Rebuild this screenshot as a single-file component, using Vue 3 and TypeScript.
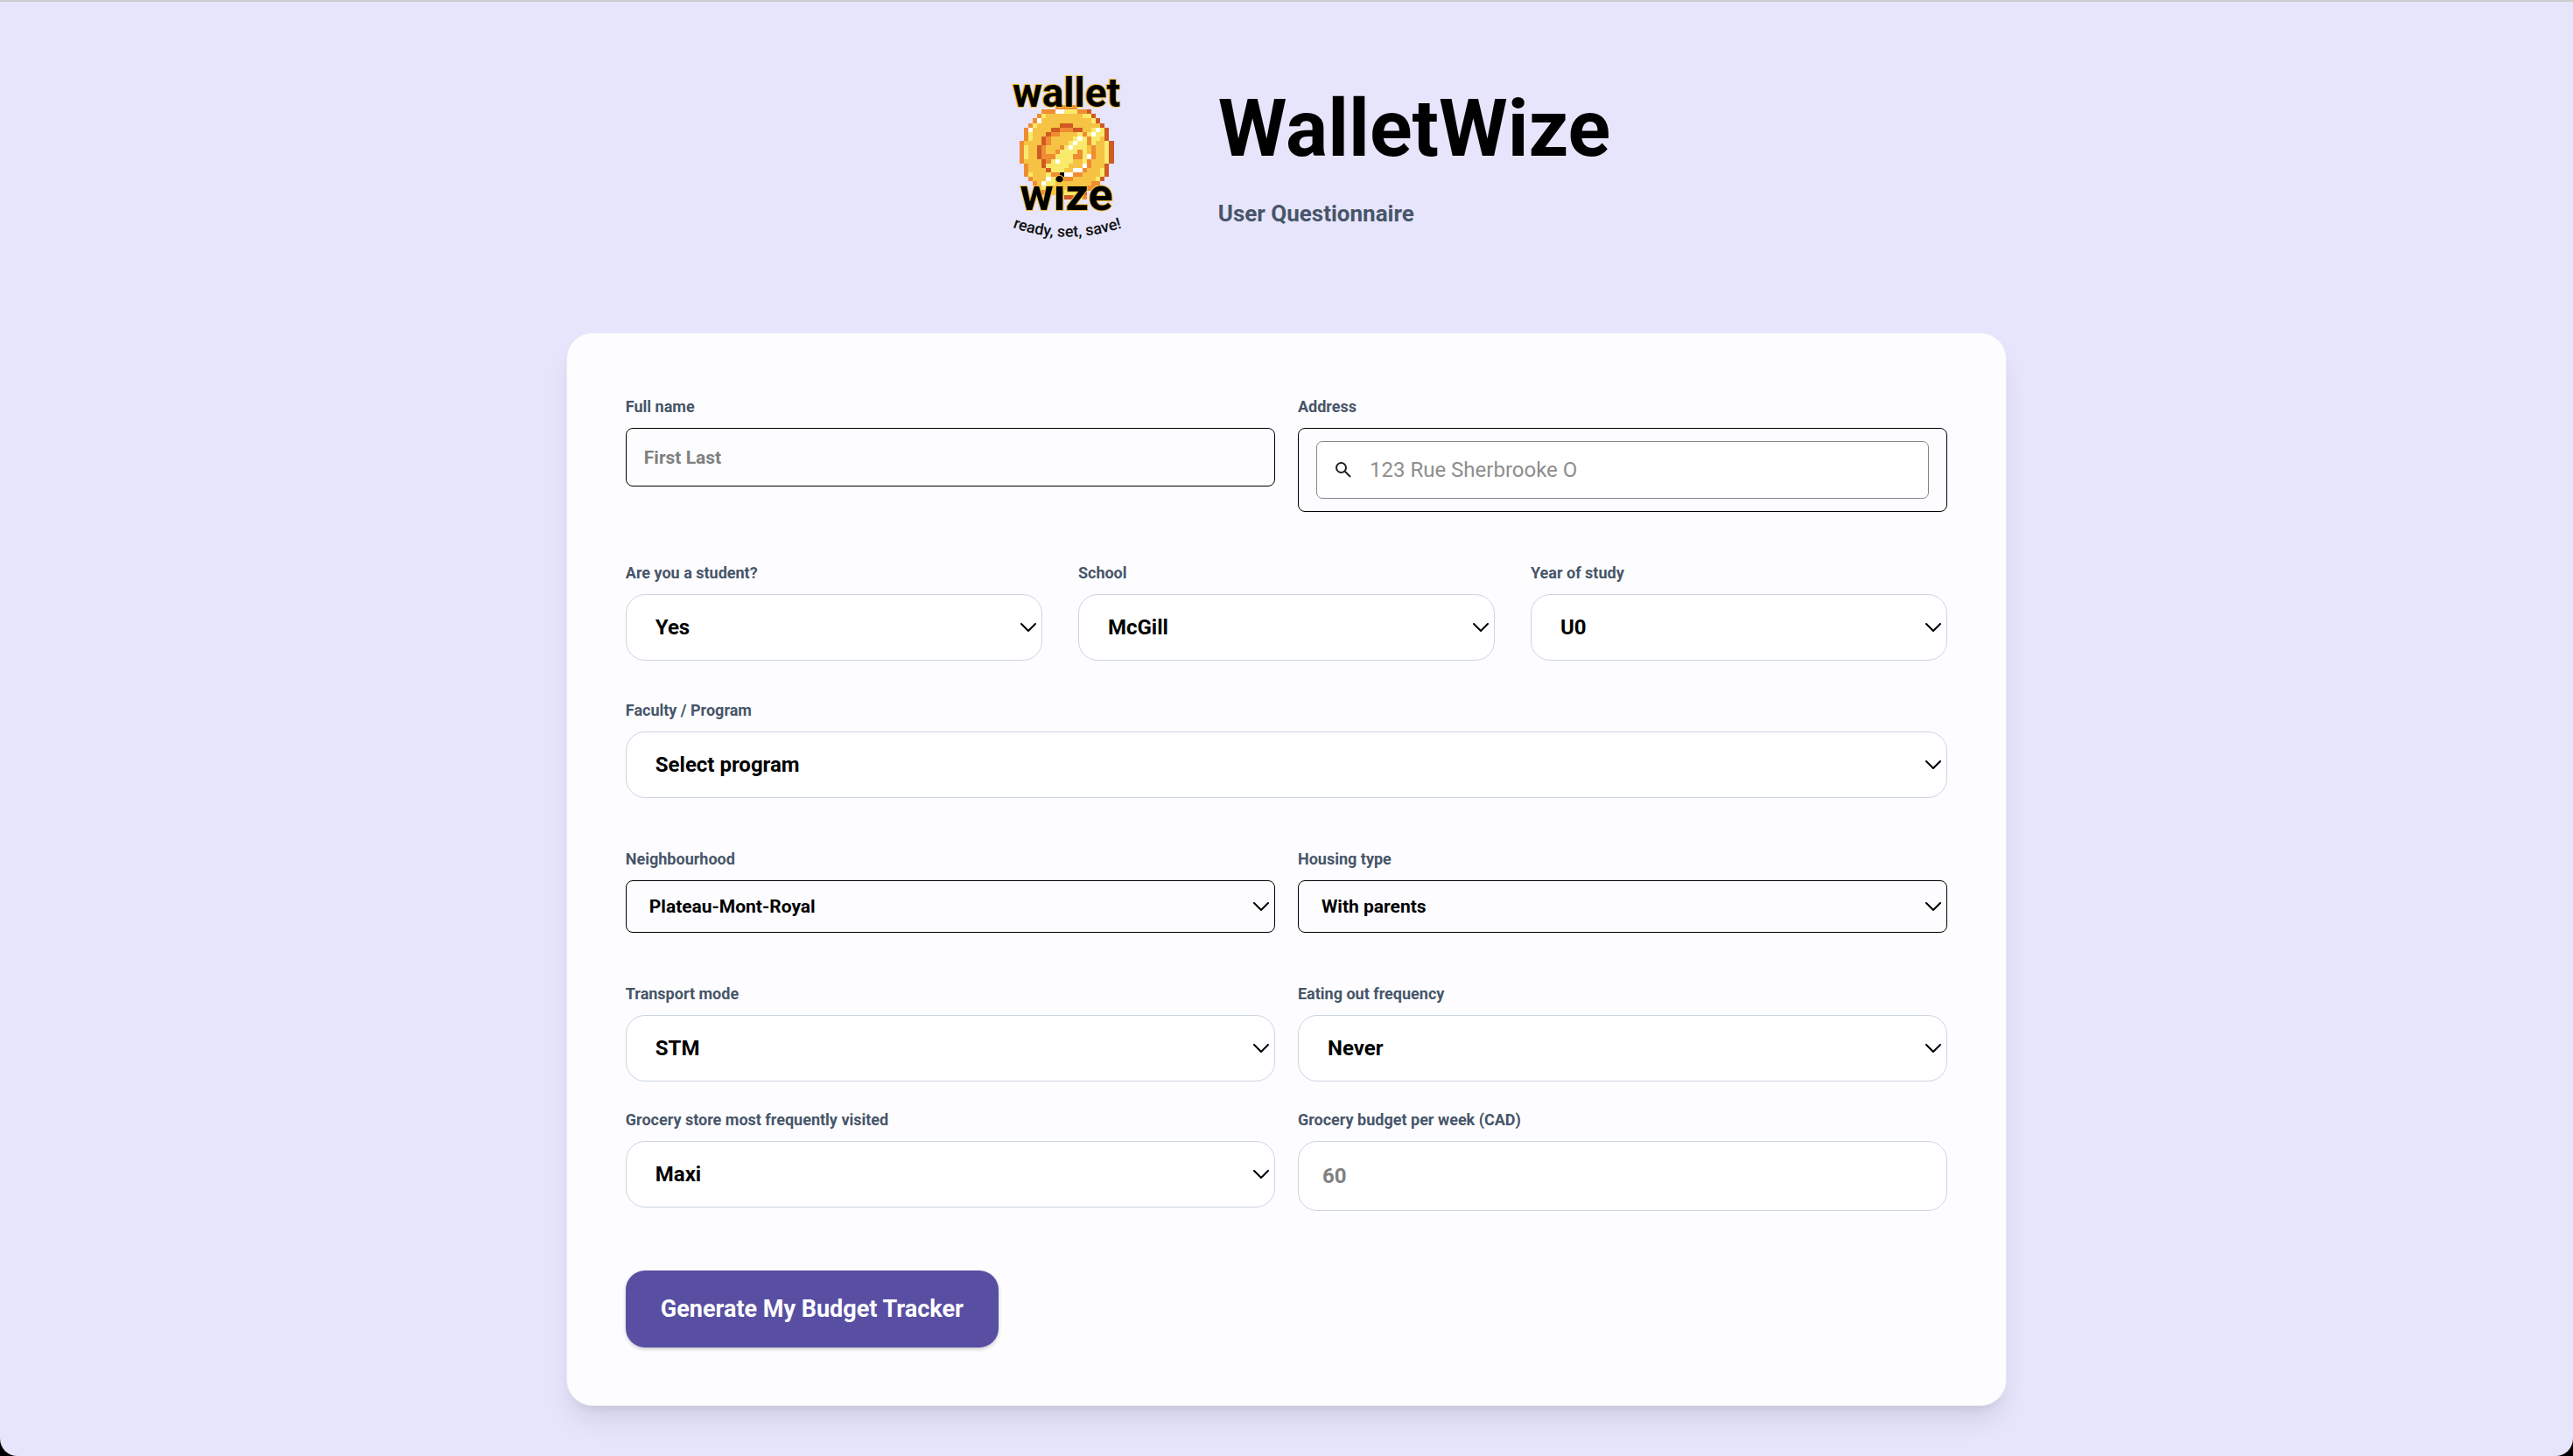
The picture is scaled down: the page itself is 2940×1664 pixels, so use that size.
<script setup lang="ts">
import { reactive } from 'vue'

interface SelectField {
  id: string
  label: string
  options: string[]
  compact?: boolean
}

const details: SelectField[] = [
  { id: 'student', label: 'Are you a student?', options: ['Yes', 'No'] },
  { id: 'school', label: 'School', options: ['McGill', 'Concordia', 'UdeM', 'UQAM'] },
  { id: 'year', label: 'Year of study', options: ['U0', 'U1', 'U2', 'U3'] },
]
const program: SelectField[] = [
  { id: 'program', label: 'Faculty / Program', options: ['Select program', 'Arts', 'Engineering', 'Science'] },
]
const home: SelectField[] = [
  { id: 'area', label: 'Neighbourhood', options: ['Plateau-Mont-Royal', 'Downtown', 'Verdun'], compact: true },
  { id: 'housing', label: 'Housing type', options: ['With parents', 'Roommates', 'Alone'], compact: true },
]
const habits: SelectField[] = [
  { id: 'transport', label: 'Transport mode', options: ['STM', 'Car', 'Bike'] },
  { id: 'eating', label: 'Eating out frequency', options: ['Never', 'Weekly', 'Daily'] },
]
const store: SelectField[] = [
  { id: 'store', label: 'Grocery store most frequently visited', options: ['Maxi', 'Provigo', 'Metro', 'IGA'] },
]
const selectRows = [
  { name: 'thirds', fields: details },
  { name: 'single', fields: program },
  { name: 'halves', fields: home },
  { name: 'halves habits', fields: habits },
]

const answers = reactive<Record<string, string>>({ name: '', address: '', budget: '' })
for (const field of [...details, ...program, ...home, ...habits, ...store]) {
  answers[field.id] = field.options[0]
}

// Coin sprite: O orange, D dark orange, G gold, L light, W white, K black
const sprite = [
  '........OOOOO........',
  '.....OOOWWLLLOOD.....',
  '....OLGGGGGGGGLLD....',
  '...OWGGGGGGGGGGGLD...',
  '..OLGGGGGDDDGGGGGGD..',
  '.OWGGGGDDOOODDGGLWLD.',
  '.OLGGGDOOGGGGLOLWLLD.',
  '.OLGGDOGGGGGLWLOLLGD.',
  'OGGGGDOGGGGLWLLOLGGLD',
  'OLGGDOGGGOLWLLLGOGGLD',
  'OLGGDOGGOLLLLOLGOGGLD',
  'OLGGDOOOLLLLOOLWOGGLD',
  'OGGGGDOLWLLLGGLOGGGLD',
  '.OGGGDLLLLLGGGWOGGGD.',
  '.OGGGGDLLLGGWWOGGGLD.',
  '.OLGGGLOOKWWOOGGGGLD.',
  '..OGGGWLGOOOGGGGGLD..',
  '...OGWLLGGGGGGGGOO...',
  '....GLLGGGGGGGGOO....',
  '.....OOGGGLLLDD......',
  '..........DDOLO......',
]
const palette: Record<string, string> = {
  O: '#f08c32', D: '#cf5a24', G: '#f6c344', L: '#faea6c', W: '#ffffff', K: '#000000',
}
const pixels = sprite.flatMap((row, y) =>
  [...row].flatMap((code, x) => (code === '.' ? [] : [{ x, y, fill: palette[code] }])),
)
</script>

<template>
  <div class="backdrop">
    <main class="page">
      <header class="header">
        <svg class="logo" viewBox="0 0 200 230" role="img" aria-label="Wallet Wize: ready, set, save!">
          <g transform="translate(44.7 60) scale(5.13)" shape-rendering="crispEdges">
            <rect v-for="p in pixels" :key="`${p.x}-${p.y}`" :x="p.x" :y="p.y" width="1.02" height="1.02" :fill="p.fill" />
          </g>
          <text class="logo-word" x="98.5" y="62" font-size="46" text-anchor="middle">wallet</text>
          <text class="logo-word" x="98.5" y="180" font-size="52" text-anchor="middle">wize</text>
          <path id="tagline" d="M37 200 Q100 223 172 197" fill="none" />
          <text class="tagline" font-size="18"><textPath href="#tagline">ready, set, save!</textPath></text>
        </svg>
        <div class="titles">
          <h1>WalletWize</h1>
          <p>User Questionnaire</p>
        </div>
      </header>

      <form class="card" @submit.prevent>
        <div class="row halves">
          <div class="field">
            <label for="name">Full name</label>
            <input id="name" v-model="answers.name" class="control outlined" type="text" placeholder="First Last" />
          </div>
          <div class="field">
            <label for="address">Address</label>
            <div class="address">
              <div class="search">
                <svg viewBox="0 0 24 24" aria-hidden="true">
                  <circle cx="9.5" cy="9.5" r="5.5" /><path d="M13.8 13.8 L20 20" />
                </svg>
                <input id="address" v-model="answers.address" type="text" placeholder="123 Rue Sherbrooke O" />
              </div>
            </div>
          </div>
        </div>

        <div v-for="(row, i) in selectRows" :key="i" class="row" :class="row.name">
          <div v-for="f in row.fields" :key="f.id" class="field">
            <label :for="f.id">{{ f.label }}</label>
            <div class="select">
              <select :id="f.id" v-model="answers[f.id]" class="control" :class="f.compact ? 'compact' : 'soft'">
                <option v-for="o in f.options" :key="o">{{ o }}</option>
              </select>
              <svg class="chevron" viewBox="0 0 18 10" aria-hidden="true"><path d="M1 1 L9 9 L17 1" /></svg>
            </div>
          </div>
        </div>

        <div class="row halves groceries">
          <div v-for="f in store" :key="f.id" class="field">
            <label :for="f.id">{{ f.label }}</label>
            <div class="select">
              <select :id="f.id" v-model="answers[f.id]" class="control soft">
                <option v-for="o in f.options" :key="o">{{ o }}</option>
              </select>
              <svg class="chevron" viewBox="0 0 18 10" aria-hidden="true"><path d="M1 1 L9 9 L17 1" /></svg>
            </div>
          </div>
          <div class="field">
            <label for="budget">Grocery budget per week (CAD)</label>
            <input id="budget" v-model="answers.budget" class="control budget" type="text" inputmode="numeric" placeholder="60" />
          </div>
        </div>

        <button type="submit">Generate My Budget Tracker</button>
      </form>
    </main>
  </div>
</template>

<style>
body {
  background: #000;
}
</style>

<style scoped>
.backdrop {
  background: #000;
  font-family: Roboto, "Liberation Sans", sans-serif;
  font-weight: 700;
}
.page {
  box-sizing: border-box;
  min-height: 100vh;
  padding: 58px 0 48px;
  border-top: 2px solid #cccccc;
  border-radius: 0 0 20px 20px;
  background: #e7e5fc;
}
.header {
  display: flex;
  justify-content: center;
  align-items: flex-start;
  gap: 72px;
  margin-bottom: 90px;
  padding-left: 20px;
}
.logo {
  width: 200px;
  height: 230px;
}
.logo-word {
  font-weight: 700;
  fill: #000;
  stroke: #f0bd35;
  stroke-width: 2px;
  paint-order: stroke;
}
.tagline {
  font-weight: 500;
  fill: #111;
}
h1,
p {
  margin: 0;
}
h1 {
  padding-top: 36px;
  font-size: 90px;
  line-height: 104px;
  color: #000;
}
p {
  margin-top: 28px;
  font-size: 26px;
  line-height: 32px;
  color: #475569;
}
.card {
  box-sizing: border-box;
  width: 56%;
  margin: 0 auto;
  padding: 72px 67px 66px;
  border: 1px solid #e6e9f5;
  border-radius: 30px;
  background: #fdfdff;
  box-shadow: 0 20px 30px -6px rgb(0 0 0 / 10%), 0 8px 12px -8px rgb(0 0 0 / 10%);
}
.row {
  display: grid;
  grid-template-columns: 1fr;
  align-items: start;
  margin-bottom: 58px;
}
.halves {
  grid-template-columns: 1fr 1fr;
  column-gap: 26px;
}
.thirds {
  grid-template-columns: 1fr 1fr 1fr;
  column-gap: 41px;
  margin-bottom: 45px;
}
.habits {
  margin-bottom: 32px;
}
.groceries {
  margin-bottom: 68px;
}
.field {
  display: flex;
  flex-direction: column;
  gap: 12px;
  min-width: 0;
}
label {
  font-size: 18px;
  line-height: 24px;
  color: #475569;
}
.control {
  box-sizing: border-box;
  display: block;
  width: 100%;
  margin: 0;
  font: inherit;
  color: #000;
  appearance: none;
}
.outlined {
  height: 67px;
  padding: 0 20px;
  border: 1px solid #000;
  border-radius: 8px;
  background: transparent;
  font-size: 21px;
}
.compact {
  height: 60px;
  padding: 0 26px;
  border: 1px solid #000;
  border-radius: 8px;
  background: transparent;
  font-size: 21px;
}
.soft {
  height: 76px;
  padding: 0 33px;
  border: 1px solid #cbd5e1;
  border-radius: 22px;
  background: #fff;
  font-size: 24px;
}
.budget {
  height: 80px;
  padding: 0 27px;
  border: 1px solid #cbd5e1;
  border-radius: 22px;
  background: #fff;
  font-size: 24px;
}
.select {
  position: relative;
}
.chevron {
  position: absolute;
  top: 50%;
  right: 7px;
  width: 18px;
  height: 10px;
  margin-top: -5px;
  fill: none;
  stroke: #000;
  stroke-width: 2;
  stroke-linecap: round;
  stroke-linejoin: round;
  pointer-events: none;
}
input::placeholder {
  color: #808080;
  opacity: 1;
}
.address {
  padding: 14px 20px;
  border: 1px solid #000;
  border-radius: 8px;
}
.search {
  display: flex;
  align-items: center;
  gap: 18px;
  height: 64px;
  padding: 0 18px;
  border: 1px solid #85868c;
  border-radius: 7px;
  background: #fff;
}
.search svg {
  flex: none;
  width: 24px;
  height: 24px;
  fill: none;
  stroke: #1f1f1f;
  stroke-width: 2;
}
.search input {
  flex: 1;
  min-width: 0;
  padding: 0;
  border: 0;
  background: transparent;
  font: 400 24px Roboto, sans-serif;
}
.search input::placeholder {
  color: #8e8e8e;
}
input:focus,
select:focus {
  outline: 2px solid #584fa3;
}
button {
  display: block;
  height: 88px;
  padding: 0 40px;
  border: 0;
  border-radius: 22px;
  background: #584fa3;
  box-shadow: 0 2px 4px rgb(0 0 0 / 20%);
  font: inherit;
  font-size: 27px;
  color: #fff;
}
</style>
